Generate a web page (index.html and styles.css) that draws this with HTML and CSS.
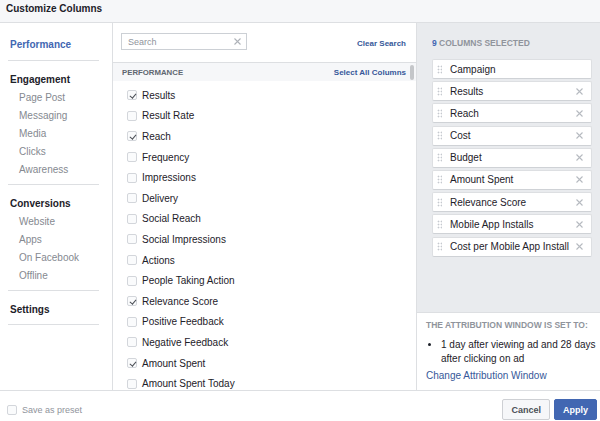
FILE: index.html
```html
<!DOCTYPE html>
<html lang="en">
<head>
    <meta charset="UTF-8">
    <meta name="viewport" content="width=device-width, initial-scale=1.0">
    <title>Customize Columns</title>
    <link rel="stylesheet" href="styles.css">
</head>
<body>

<div class="dialog">
    <header class="title">Customize Columns</header>

    <div class="main">
        <nav class="sidebar">
            <div class="group">
                <div class="group-head active">Performance</div>
            </div>
            <div class="group">
                <div class="group-head">Engagement</div>
                <div class="sub">Page Post</div>
                <div class="sub">Messaging</div>
                <div class="sub">Media</div>
                <div class="sub">Clicks</div>
                <div class="sub">Awareness</div>
            </div>
            <div class="group">
                <div class="group-head">Conversions</div>
                <div class="sub">Website</div>
                <div class="sub">Apps</div>
                <div class="sub">On Facebook</div>
                <div class="sub">Offline</div>
            </div>
            <div class="group">
                <div class="group-head">Settings</div>
            </div>
        </nav>

        <section class="columns">
            <div class="search-row">
                <div class="search">
                    <span>Search</span>
                    <svg width="7" height="7" viewBox="0 0 7 7"><path d="M0.5 0.5 L6.5 6.5 M6.5 0.5 L0.5 6.5" stroke="#aeb2b8" stroke-width="1.1"/></svg>
                </div>
                <a class="link clear">Clear Search</a>
            </div>
            <div class="section-bar">
                <span class="section-name">PERFORMANCE</span>
                <a class="link">Select All Columns</a>
            </div>
            <div class="scroll-thumb"></div>
            <ul class="options" id="options"></ul>
        </section>

        <aside class="selected">
            <div class="selected-top">
                <div class="count"><span class="num">9</span> COLUMNS SELECTED</div>
                <ul class="chosen" id="chosen"></ul>
            </div>
            <div class="attribution">
                <div class="attr-title">THE ATTRIBUTION WINDOW IS SET TO:</div>
                <ul class="attr-list">
                    <li>1 day after viewing ad and 28 days after clicking on ad</li>
                </ul>
                <a class="attr-link">Change Attribution Window</a>
            </div>
        </aside>
    </div>

    <footer class="footer">
        <label class="preset"><span class="box"></span>Save as preset</label>
        <div class="buttons">
            <button class="btn cancel">Cancel</button>
            <button class="btn apply">Apply</button>
        </div>
    </footer>
</div>

<script>
    const options = [
        ["Results", true], ["Result Rate", false], ["Reach", true], ["Frequency", false],
        ["Impressions", false], ["Delivery", false], ["Social Reach", false],
        ["Social Impressions", false], ["Actions", false], ["People Taking Action", false],
        ["Relevance Score", true], ["Positive Feedback", false], ["Negative Feedback", false],
        ["Amount Spent", true], ["Amount Spent Today", false]
    ];

    const chosen = [
        "Campaign", "Results", "Reach", "Cost", "Budget", "Amount Spent",
        "Relevance Score", "Mobile App Installs", "Cost per Mobile App Install"
    ];

    const xIcon = '<svg class="remove" width="7" height="7" viewBox="0 0 7 7"><path d="M0.5 0.5 L6.5 6.5 M6.5 0.5 L0.5 6.5" stroke="#b6bac0" stroke-width="1.1"/></svg>';

    document.getElementById("options").innerHTML = options.map(([name, on]) =>
        `<li class="option"><span class="box${on ? " on" : ""}"></span>${name}</li>`
    ).join("");

    document.getElementById("chosen").innerHTML = chosen.map((name, i) =>
        `<li class="item"><span class="grip"></span><span class="item-name">${name}</span>${i > 0 ? xIcon : ""}</li>`
    ).join("");
</script>

</body>
</html>
```

FILE: styles.css
```css
body {
    margin: 0;
    padding: 0;
    background-color: white;
    font-family: "Liberation Sans", Arial, sans-serif;
    color: #1d2129;
}

ul {
    list-style: none;
    margin: 0;
    padding: 0;
}

.dialog {
    width: 600px;
    height: 421px;
    display: flex;
    flex-direction: column;
    overflow: hidden;
}

.title {
    height: 23px;
    box-sizing: border-box;
    padding: 3px 0 0 6px;
    line-height: 12px;
    font-size: 10px;
    font-weight: bold;
    background-color: #f6f7f9;
    border-bottom: 1px solid #dddfe2;
    flex-shrink: 0;
}

.main {
    display: flex;
    height: 367px;
    flex-shrink: 0;
}

/* left menu */

.sidebar {
    width: 112px;
    border-right: 1px solid #dddfe2;
    padding-top: 4px;
    flex-shrink: 0;
}

.group {
    margin: 0 13px 0 8px;
    padding: 10px 0 5px;
    border-bottom: 1px solid #dddfe2;
}

.group:first-child {
    padding-top: 9px;
    padding-bottom: 6px;
}

.group-head {
    height: 18px;
    line-height: 18px;
    padding-left: 2px;
    font-size: 10px;
    font-weight: bold;
}

.group-head.active {
    color: #4267b2;
}

.sub {
    height: 18px;
    line-height: 18px;
    padding-left: 11px;
    font-size: 10px;
    color: #858990;
}

/* middle list */

.columns {
    width: 303px;
    border-right: 1px solid #dddfe2;
    position: relative;
    overflow: hidden;
    flex-shrink: 0;
}

.search-row {
    height: 39px;
    box-sizing: border-box;
    padding: 10px 10px 0 8px;
    display: flex;
    justify-content: space-between;
    align-items: flex-start;
}

.search {
    width: 126px;
    height: 17px;
    box-sizing: border-box;
    border: 1px solid #ccd0d5;
    display: flex;
    align-items: center;
    justify-content: space-between;
    padding: 0 5px 0 6px;
    font-size: 9px;
    color: #90949c;
}

.link {
    font-size: 8px;
    font-weight: bold;
    color: #365899;
    line-height: 17px;
}

.link.clear {
    margin-top: 2px;
}

.section-bar {
    height: 19px;
    box-sizing: border-box;
    border-top: 1px solid #dddfe2;
    background-color: #f6f7f9;
    display: flex;
    justify-content: space-between;
    align-items: center;
    padding: 0 10px 0 9px;
}

.section-name {
    font-size: 7.8px;
    font-weight: bold;
    color: #606770;
}

.scroll-thumb {
    position: absolute;
    left: 297px;
    top: 42px;
    width: 4px;
    height: 15px;
    border-radius: 2px;
    background-color: #c4c6c9;
}

.options {
    padding-top: 4px;
}

.option {
    height: 20.6px;
    display: flex;
    align-items: center;
    padding-left: 14px;
    font-size: 10px;
}

.box {
    width: 10px;
    height: 10px;
    box-sizing: border-box;
    border: 1px solid #d3d6db;
    border-radius: 2px;
    background-color: #fafbfc;
    margin-right: 5px;
    position: relative;
    flex-shrink: 0;
}

.box.on::after {
    content: "";
    position: absolute;
    left: 2.5px;
    top: 0.5px;
    width: 2.5px;
    height: 5px;
    border: solid #4b4f56;
    border-width: 0 1.3px 1.3px 0;
    transform: rotate(40deg);
}

/* right panel */

.selected {
    width: 183px;
    display: flex;
    flex-direction: column;
    flex-shrink: 0;
}

.selected-top {
    height: 290px;
    background-color: #e9ebee;
    padding: 15px 8px 0 15px;
    box-sizing: border-box;
    border-bottom: 1px solid #dddfe2;
}

.count {
    font-size: 8.5px;
    font-weight: bold;
    color: #90949c;
    height: 11px;
    line-height: 11px;
}

.count .num {
    color: #4267b2;
}

.chosen {
    margin-top: 10px;
}

.item {
    height: 20px;
    box-sizing: border-box;
    background-color: white;
    border: 1px solid #dddfe2;
    border-bottom-color: #cfd2d6;
    border-radius: 2px;
    margin-bottom: 2.2px;
    display: flex;
    align-items: center;
    padding: 0 8px 0 4px;
    font-size: 10px;
}

.grip {
    width: 5px;
    height: 9px;
    margin-right: 8px;
    background-image: radial-gradient(circle, #c5c9cf 0.8px, transparent 1.1px);
    background-size: 3px 3px;
    flex-shrink: 0;
}

.item-name {
    flex: 1;
    white-space: nowrap;
}

.attribution {
    flex: 1;
    padding: 6px 4px 0 9px;
}

.attr-title {
    font-size: 8.5px;
    font-weight: bold;
    color: #90949c;
    height: 12px;
    line-height: 12px;
}

.attr-list {
    margin-top: 7px;
    padding-left: 15px;
    list-style: disc;
}

.attr-list li {
    font-size: 10px;
    line-height: 14px;
}

.attr-link {
    display: block;
    margin-top: 3px;
    font-size: 10px;
    line-height: 14px;
    color: #365899;
}

/* footer */

.footer {
    flex: 1;
    border-top: 1px solid #dddfe2;
    display: flex;
    justify-content: space-between;
    align-items: flex-start;
    padding: 8px 3px 0 7px;
}

.preset {
    display: flex;
    align-items: center;
    font-size: 9px;
    color: #90949c;
    margin-top: 6px;
}

.buttons {
    display: flex;
    gap: 4px;
}

.btn {
    height: 21px;
    font-family: "Liberation Sans", Arial, sans-serif;
    font-size: 9px;
    font-weight: bold;
    border-radius: 2px;
    padding: 0 8px;
    cursor: pointer;
}

.cancel {
    background-color: #f6f7f9;
    border: 1px solid #ced0d4;
    color: #4b4f56;
}

.apply {
    background-color: #4267b2;
    border: 1px solid #4267b2;
    color: white;
}
```
